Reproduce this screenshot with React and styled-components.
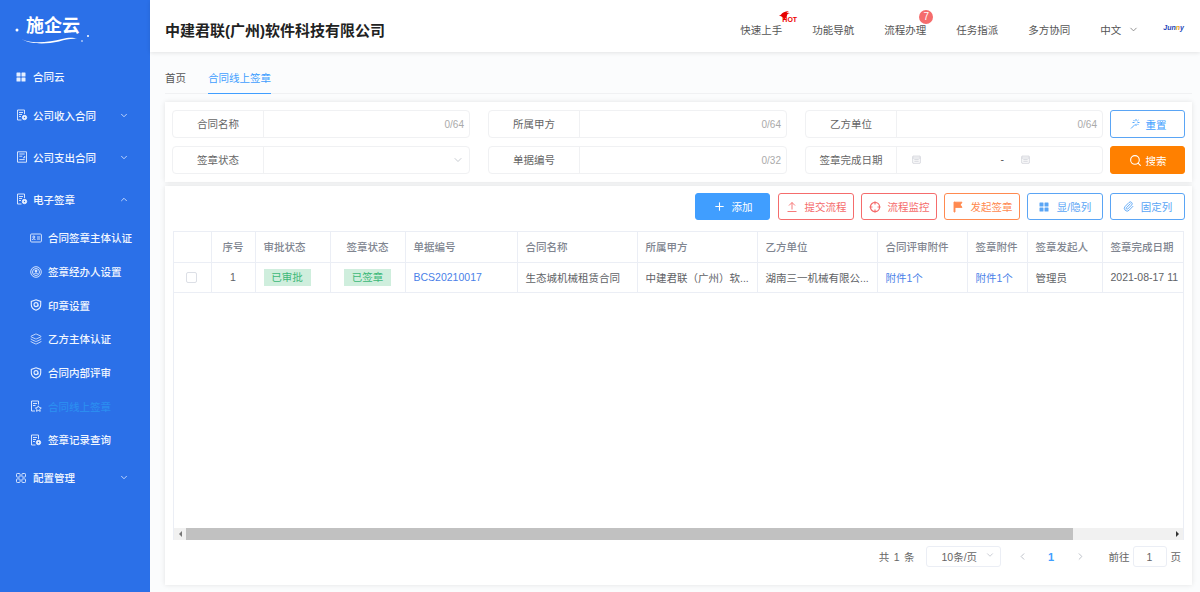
import React from "react";
import styled, { createGlobalStyle } from "styled-components";
import { ChevronDown, ChevronUp, ChevronLeft, ChevronRight, Plus, Search, Paperclip, Layers } from "lucide-react";

const Global = createGlobalStyle`
  html, body { margin: 0; padding: 0; height: 100%; overflow: hidden; }
  body { font-family: "Liberation Sans", "Noto Sans CJK SC", sans-serif; font-size: 10.5px; color: #606266; }
  * { box-sizing: border-box; }
`;

const Page = styled.div`
  display: flex;
  width: 1200px;
  height: 592px;
  background: #fbfcfd;
`;

// sidebar
const Side = styled.aside`
  flex: 0 0 150px;
  background: #2b70e8;
  color: #fff;
`;
const LogoBox = styled.div`
  position: relative;
  height: 59px;
  padding: 12px 0 0 26px;
  font-size: 18px;
  line-height: 28px;
  font-weight: 700;
`;
const LogoArt = styled.svg`
  position: absolute;
  left: 12px;
  top: 26px;
`;
const MenuItem = styled.div`
  display: flex;
  align-items: center;
  height: ${p => p.$h || 42}px;
  padding-left: ${p => (p.$sub ? 30 : 16)}px;
  color: ${p => (p.$active ? "#2b8df0" : "#f2f7ff")};
  font-weight: 500;
  gap: ${p => p.$gap || 6}px;
  svg.ic { flex: 0 0 auto; color: #e6efff; }
`;
const SubMenu = styled.div`
  padding-top: 1px;
`;
const MenuText = styled.span`
  flex: 1;
`;
const MenuArrow = styled.span`
  display: flex;
  width: 10px;
  margin-right: 21px;
  color: #dce8ff;
`;

// top header
const Main = styled.div`
  flex: 1;
  display: flex;
  flex-direction: column;
  min-width: 0;
`;
const Header = styled.header`
  height: 52px;
  display: flex;
  align-items: center;
  padding: 0 16px 0 15px;
  background: #fff;
  box-shadow: 0 1px 4px rgba(0, 0, 0, 0.1);
`;
const Title = styled.h1`
  flex: 1;
  margin: 7px 0 0;
  font-size: 15px;
  font-weight: 700;
  color: #222;
`;
const Nav = styled.nav`
  display: flex;
  align-items: center;
  gap: 30px;
  margin-top: 7px;
  color: #555;
`;
const NavItem = styled.span`
  position: relative;
  white-space: nowrap;
`;
const Hot = styled.span`
  position: absolute;
  left: 38px;
  top: -11px;
  display: flex;
  align-items: flex-start;
  color: #e00;
  font: 700 7px/7px "Liberation Sans", sans-serif;
  svg { margin-right: -10px; }
  b { margin-top: 5px; }
`;
const Badge = styled.span`
  position: absolute;
  left: 35px;
  top: -12px;
  width: 14px;
  height: 14px;
  border-radius: 50%;
  background: #f56c6c;
  color: #fff;
  font: 10px/14px "Liberation Sans", sans-serif;
  text-align: center;
`;
const Lang = styled.span`
  display: flex;
  align-items: center;
  gap: 7px;
  margin-right: -6px;
  svg { color: #888; }
`;
const Junny = styled.span`
  margin: 4px 0 0 30px;
  color: #2244b8;
  font: italic 700 7px/8px "Liberation Sans", sans-serif;
  i { color: #e8a020; }
`;

// tabs
const Tabs = styled.div`
  display: flex;
  gap: 22px;
  height: 34px;
  margin: 8px 8px 8px 15px;
  border-bottom: 1px solid #f0f1f3;
`;
const Tab = styled.div`
  height: 34px;
  line-height: 36px;
  color: ${p => (p.$active ? "#409eff" : "#555")};
  border-bottom: ${p => (p.$active ? "1px solid #409eff" : "none")};
`;

// cards
const Card = styled.section`
  margin: 0 8px 0 15px;
  background: #fff;
  box-shadow: 0 0 5px rgba(0, 0, 0, 0.1);
`;
const FilterCard = styled(Card)`
  padding: 8px 7px;
  margin-bottom: 4px;
`;
const FilterRow = styled.div`
  display: flex;
  & + & { margin-top: 8px; }
`;
const Field = styled.div`
  display: flex;
  flex: 0 0 ${p => p.$w}px;
  height: 28px;
  margin-right: ${p => p.$gap}px;
  border: 1px solid #f0f1f3;
  border-radius: 4px;
  background: #fff;
`;
const FieldLabel = styled.div`
  flex: 0 0 91px;
  text-align: center;
  line-height: 26px;
  color: #666;
  border-right: 1px solid #f0f1f3;
`;
const FieldBody = styled.div`
  flex: 1;
  display: flex;
  align-items: center;
  justify-content: flex-end;
  padding-right: 5px;
  color: #aaa;
  font-size: 10px;
`;
const DateBody = styled.div`
  flex: 1;
  display: flex;
  align-items: center;
  padding: 0 0 2px 15px;
  color: #c0c4cc;
`;
const DateDash = styled.span`
  width: 100px;
  padding-right: 17px;
  text-align: right;
  color: #555;
`;
const Btn = styled.button`
  display: flex;
  align-items: center;
  justify-content: center;
  gap: ${p => p.$gap || 7}px;
  flex: 0 0 ${p => p.$w || 76}px;
  height: ${p => p.$h || 27}px;
  padding: 0;
  font: inherit;
  color: ${p => p.$text || (p.$solid ? "#fff" : p.$color)};
  background: ${p => (p.$solid ? p.$color : "#fff")};
  border: 1px solid ${p => p.$color};
  border-radius: 3px;
`;
const AddBtn = styled(Btn)`
  margin-right: 1px;
`;

// table card
const TableCard = styled(Card)`
  height: 399px;
  padding: 7px 7px 0 8px;
`;
const Toolbar = styled.div`
  display: flex;
  justify-content: flex-end;
  gap: 7px;
  margin-bottom: 11px;
`;
const TableWrap = styled.div`
  display: flex;
  flex-direction: column;
  width: 1011px;
  height: 309px;
  border: 1px solid #ebeef5;
  border-bottom: 0;
`;
const TableClip = styled.div`
  flex: 1;
  overflow: hidden;
`;
const Table = styled.table`
  width: 100%;
  table-layout: fixed;
  border-collapse: collapse;
  th, td {
    height: 30px;
    padding: 0 8px;
    border-right: 1px solid #ebeef5;
    border-bottom: 1px solid #ebeef5;
    text-align: left;
    white-space: nowrap;
    font-weight: 400;
  }
  th { color: #808590; font-weight: 500; }
  td { color: #606266; }
  th:last-child, td:last-child { border-right: 0; }
`;
const CenterCell = styled.td`
  && { text-align: center; }
`;
const CenterHead = styled.th`
  && { text-align: center; }
`;
const Check = styled.span`
  display: block;
  width: 11px;
  height: 11px;
  margin-left: 4px;
  border: 1px solid #dcdfe6;
  border-radius: 2px;
`;
const Tag = styled.span`
  display: inline-block;
  width: 47px;
  height: 17px;
  line-height: 17px;
  text-align: center;
  background: #cfeedd;
  color: #3cb878;
`;
const LinkText = styled.span`
  color: #4a7fe8;
`;
const Scrollbar = styled.div`
  display: flex;
  flex: 0 0 12px;
  background: #f1f1f1;
`;
const ScrollArrow = styled.div`
  flex: 0 0 12px;
  display: flex;
  align-items: center;
  justify-content: center;
  &::before {
    content: "";
    border: 3px solid transparent;
    ${p => (p.$left ? "border-right-color: #777; margin-left: -3px;" : "border-left-color: #333; margin-left: 3px;")}
  }
`;
const ScrollThumb = styled.div`
  flex: 0 0 887px;
  background: #c1c1c1;
`;
const Spacer = styled.div`
  flex: 1;
`;

// pagination
const Pager = styled.div`
  display: flex;
  align-items: center;
  justify-content: flex-end;
  height: 21px;
  margin-top: 6px;
  padding-right: 4px;
  color: #666;
`;
const PagerTotal = styled.span`
  word-spacing: 1.5px;
`;
const PageSelect = styled.div`
  display: flex;
  align-items: center;
  justify-content: space-between;
  width: 75px;
  height: 21px;
  margin: 0 16px 0 11px;
  padding: 0 5px 0 15px;
  border: 1px solid #ebeef5;
  border-radius: 3px;
  svg { color: #c0c4cc; margin-top: -4px; }
`;
const PageNum = styled.b`
  width: 47px;
  text-align: center;
  color: #409eff;
  font-size: 11px;
  font-weight: 700;
`;
const PageArrow = styled.span`
  display: flex;
  color: #b8bcc4;
`;
const PagerJump = styled.span`
  margin-left: 23px;
`;
const PageInput = styled.div`
  width: 34px;
  height: 21px;
  margin: 0 4px 0 3px;
  line-height: 20px;
  text-align: center;
  border: 1px solid #ebeef5;
  border-radius: 3px;
`;

// icons drawn to match the screenshot
const Ic = ({ size = 12, children, ...rest }) => (
  <svg className="ic" width={size} height={size} viewBox="0 0 12 12" fill="none" stroke="currentColor" strokeWidth="0.9" {...rest}>
    {children}
  </svg>
);
const DocGear = () => (
  <Ic>
    <path d="M8.500 5V1H1.500v10h4" />
    <path d="M3 3.500h4M3 5.500h3M3 7.500h2" />
    <circle cx="8.500" cy="8.500" r="2.200" fill="currentColor" />
    <circle cx="8.500" cy="8.500" r=".7" fill="#2b70e8" stroke="none" />
  </Ic>
);
const DocForm = () => (
  <Ic>
    <path d="M1.500 .8h9v10.400h-9z" />
    <path d="M3.300 3h5.400M3.300 5.200h3M3.300 8.600h5.400M8.700 5v1.800H7" />
  </Ic>
);
const IdIcon = () => (
  <Ic>
    <rect x=".6" y="2" width="10.800" height="8" rx="1" />
    <circle cx="3.800" cy="5" r="1" />
    <path d="M2.300 8c.2-1.600 2.800-1.600 3 0M7 5h3M7 7h3" />
  </Ic>
);
const RoundUser = () => (
  <Ic>
    <circle cx="6" cy="6" r="5.300" />
    <circle cx="6" cy="6" r="3.500" />
    <circle cx="6" cy="5" r="1" fill="currentColor" />
    <path d="M4.200 8c.4-1.300 3.200-1.300 3.600 0" />
  </Ic>
);
const ShieldIcon = () => (
  <Ic strokeWidth="1.100">
    <path d="M6 .8l4.700 1.600v3.400c0 2.800-2.200 4.600-4.700 5.400-2.500-.8-4.700-2.600-4.700-5.400V2.400z" />
    <circle cx="6" cy="5.600" r="2" />
    <path d="M8 5.600v2" />
  </Ic>
);
const DocStar = () => (
  <Ic>
    <path d="M8.500 4.500V1h-7v10h3.500" />
    <path d="M3 3.500h4M3 5.500h2.500" />
    <path d="M8.300 5.800l1 1.800 2 .3-1.400 1.400.3 2-1.900-.9-1.800.9.300-2-1.400-1.400 2-.3z" fill="#2b70e8" />
  </Ic>
);
const GridFilled = ({ size = 10 }) => (
  <svg className="ic" width={size} height={size} viewBox="0 0 10 10" fill="currentColor">
    <rect x=".5" y=".5" width="4" height="4" rx=".5" />
    <rect x="5.500" y=".5" width="4" height="4" rx=".5" />
    <rect x=".5" y="5.500" width="4" height="4" rx=".5" />
    <rect x="5.500" y="5.500" width="4" height="4" rx=".5" />
  </svg>
);
const GridOutline = () => (
  <Ic size={10} viewBox="0 0 10 10">
    <rect x=".5" y=".5" width="3.600" height="3.600" rx=".8" />
    <rect x="5.900" y=".5" width="3.600" height="3.600" rx=".8" />
    <rect x=".5" y="5.900" width="3.600" height="3.600" rx=".8" />
    <rect x="5.900" y="5.900" width="3.600" height="3.600" rx=".8" />
  </Ic>
);
const UploadLine = () => (
  <Ic>
    <path d="M6 1.500v7M3 4.500l3-3 3 3M1.500 10.500h9" />
  </Ic>
);
const Target = () => (
  <Ic>
    <circle cx="6" cy="6" r="4.600" strokeWidth="1.200" />
    <path d="M6 .5v3M6 8.500v3M.5 6h3M8.500 6h3" strokeWidth="1.200" />
  </Ic>
);
const FlagIcon = () => (
  <Ic>
    <path d="M2 1h1v10H2z" fill="currentColor" />
    <path d="M3 1.200h7L8.300 3.800 10 6.400H3z" fill="currentColor" />
  </Ic>
);
const Wand = () => (
  <Ic>
    <path d="M2 10.500l4-4" />
    <path d="M7 1v2M7 6v2M3.500 4.500h2M8.500 4.500h2M4.500 2l1.200 1.200M9.500 2L8.300 3.200M9.500 7L8.300 5.800" />
  </Ic>
);
const Cal = () => (
  <Ic size={9}>
    <rect x="1" y="1.500" width="10" height="9.500" rx=".5" />
    <path d="M1 4h10M3 6.200h6M3 8.400h6" />
  </Ic>
);
const Flame = () => (
  <svg width="14" height="9" viewBox="0 0 11 8" fill="#e60000">
    <path d="M0 4c2 0 2-1 3-2 1-1 4-2 6-2-1 .6-2 1-2 1.600 1 0 2 0 3 .4-1 0-2 .4-2.500 1L7 5 4.500 8C4.500 6 3 5 0 4z" />
  </svg>
);
const Swoosh = () => (
  <LogoArt width="84" height="20" viewBox="0 0 84 20" fill="none">
    <circle cx="5" cy="4" r="1.500" fill="#fff" />
    <circle cx="76" cy="10" r="1" fill="#fff" />
    <circle cx="70" cy="15" r=".8" fill="#fff" />
    <path d="M8 12c10 7 30 4 42 1 6-1.500 11-2 15 0-6-.5-11 .5-18 2.500-14 3-30 3-39-3.500z" fill="#fff" />
  </LogoArt>
);

const menuTop = [
  { label: "公司收入合同", icon: <DocGear />, gap: 5 },
  { label: "公司支出合同", icon: <DocForm />, gap: 5 },
  { label: "电子签章", icon: <DocGear />, gap: 5, open: true },
];
const menuSub = [
  { label: "合同签章主体认证", icon: <IdIcon /> },
  { label: "签章经办人设置", icon: <RoundUser /> },
  { label: "印章设置", icon: <ShieldIcon /> },
  { label: "乙方主体认证", icon: <Layers className="ic" size={12} strokeWidth={1.6} /> },
  { label: "合同内部评审", icon: <ShieldIcon /> },
  { label: "合同线上签章", icon: <DocStar />, active: true },
  { label: "签章记录查询", icon: <DocGear /> },
];
const columns = [
  { w: 37 }, { w: 44, label: "序号", center: true }, { w: 75, label: "审批状态" },
  { w: 75, label: "签章状态", center: true }, { w: 112, label: "单据编号" }, { w: 120, label: "合同名称" },
  { w: 120, label: "所属甲方" }, { w: 120, label: "乙方单位" }, { w: 90, label: "合同评审附件" },
  { w: 60, label: "签章附件" }, { w: 75, label: "签章发起人" }, { w: 81, label: "签章完成日期" },
];
const blue = "#5aa5f5";
const red = "#f56c6c";
const orange = "#ff8a50";

export default function App() {
  return (
    <Page>
      <Global />
      <Side>
        <LogoBox>
          施企云
          <Swoosh />
        </LogoBox>
        <MenuItem $h={35} $gap={7}>
          <GridFilled />
          <MenuText>合同云</MenuText>
        </MenuItem>
        {menuTop.map(m => (
          <MenuItem key={m.label} $gap={m.gap}>
            {m.icon}
            <MenuText>{m.label}</MenuText>
            <MenuArrow>{m.open ? <ChevronUp size={11} /> : <ChevronDown size={11} />}</MenuArrow>
          </MenuItem>
        ))}
        <SubMenu>
          {menuSub.map(m => (
            <MenuItem key={m.label} $sub $h={33.7} $active={m.active}>
              {m.icon}
              <MenuText>{m.label}</MenuText>
            </MenuItem>
          ))}
        </SubMenu>
        <MenuItem $gap={7}>
          <GridOutline />
          <MenuText>配置管理</MenuText>
          <MenuArrow><ChevronDown size={11} /></MenuArrow>
        </MenuItem>
      </Side>
      <Main>
        <Header>
          <Title>中建君联(广州)软件科技有限公司</Title>
          <Nav>
            <NavItem>快速上手<Hot><Flame /><b>HOT</b></Hot></NavItem>
            <NavItem>功能导航</NavItem>
            <NavItem>流程办理<Badge>7</Badge></NavItem>
            <NavItem>任务指派</NavItem>
            <NavItem>多方协同</NavItem>
            <Lang>中文 <ChevronDown size={11} /></Lang>
          </Nav>
          <Junny>Jun<i>n</i>y</Junny>
        </Header>
        <Tabs>
          <Tab>首页</Tab>
          <Tab $active>合同线上签章</Tab>
        </Tabs>
        <FilterCard>
          <FilterRow>
            <Field $w={298} $gap={18}><FieldLabel>合同名称</FieldLabel><FieldBody>0/64</FieldBody></Field>
            <Field $w={299} $gap={18}><FieldLabel>所属甲方</FieldLabel><FieldBody>0/64</FieldBody></Field>
            <Field $w={298} $gap={7}><FieldLabel>乙方单位</FieldLabel><FieldBody>0/64</FieldBody></Field>
            <Btn $color={blue} $text="#409eff" $w={75} $h={28} $gap={5}><Wand />重置</Btn>
          </FilterRow>
          <FilterRow>
            <Field $w={298} $gap={18}><FieldLabel>签章状态</FieldLabel><FieldBody><ChevronDown size={12} color="#c8ccd2" /></FieldBody></Field>
            <Field $w={299} $gap={18}><FieldLabel>单据编号</FieldLabel><FieldBody>0/32</FieldBody></Field>
            <Field $w={298} $gap={7}>
              <FieldLabel>签章完成日期</FieldLabel>
              <DateBody><Cal /><DateDash>-</DateDash><Cal /></DateBody>
            </Field>
            <Btn $color="#ff8000" $solid $w={75} $h={28} $gap={4}><Search size={13} />搜索</Btn>
          </FilterRow>
        </FilterCard>
        <TableCard>
          <Toolbar>
            <AddBtn $color="#409eff" $solid $w={75} $gap={6}><Plus size={13} />添加</AddBtn>
            <Btn $color={red}><UploadLine />提交流程</Btn>
            <Btn $color={red}><Target />流程监控</Btn>
            <Btn $color={orange}><FlagIcon />发起签章</Btn>
            <Btn $color={blue} $gap={8}><GridFilled />显/隐列</Btn>
            <Btn $color={blue} $w={75}><Paperclip size={11} />固定列</Btn>
          </Toolbar>
          <TableWrap>
            <TableClip>
              <Table>
                <colgroup>
                  {columns.map((c, i) => <col key={i} width={c.w} />)}
                </colgroup>
                <thead>
                  <tr>
                    {columns.map((c, i) => c.center
                      ? <CenterHead key={i}>{c.label}</CenterHead>
                      : <th key={i}>{c.label}</th>)}
                  </tr>
                </thead>
                <tbody>
                  <tr>
                    <td><Check /></td>
                    <CenterCell>1</CenterCell>
                    <td><Tag>已审批</Tag></td>
                    <CenterCell><Tag>已签章</Tag></CenterCell>
                    <td><LinkText>BCS20210017</LinkText></td>
                    <td>生态城机械租赁合同</td>
                    <td>中建君联（广州）软...</td>
                    <td>湖南三一机械有限公...</td>
                    <td><LinkText>附件1个</LinkText></td>
                    <td><LinkText>附件1个</LinkText></td>
                    <td>管理员</td>
                    <td>2021-08-17 11</td>
                  </tr>
                </tbody>
              </Table>
            </TableClip>
            <Scrollbar>
              <ScrollArrow $left />
              <ScrollThumb />
              <Spacer />
              <ScrollArrow />
            </Scrollbar>
          </TableWrap>
          <Pager>
            <PagerTotal>共 1 条</PagerTotal>
            <PageSelect>10条/页<ChevronDown size={10} /></PageSelect>
            <PageArrow><ChevronLeft size={11} /></PageArrow>
            <PageNum>1</PageNum>
            <PageArrow><ChevronRight size={11} /></PageArrow>
            <PagerJump>前往</PagerJump>
            <PageInput>1</PageInput>
            页
          </Pager>
        </TableCard>
      </Main>
    </Page>
  );
}
